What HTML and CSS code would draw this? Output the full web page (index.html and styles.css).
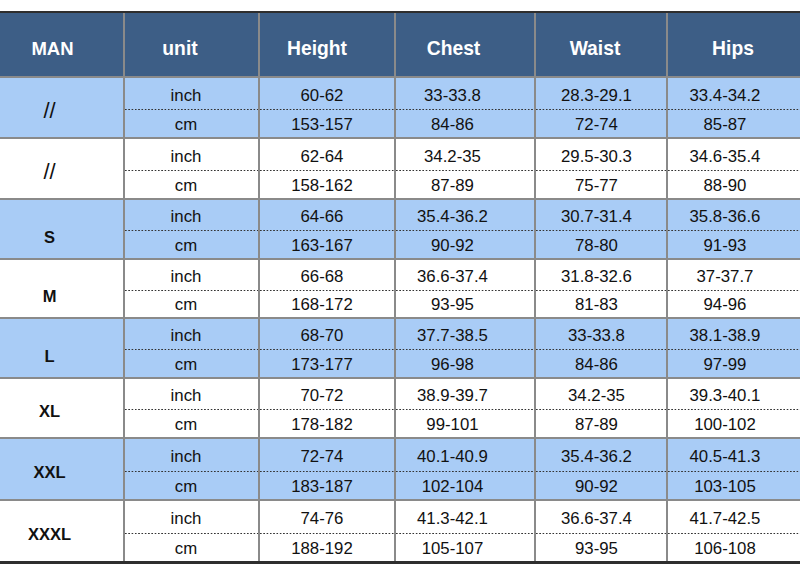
FILE: index.html
```html
<!DOCTYPE html>
<html>
<head>
<meta charset="utf-8">
<link rel="stylesheet" href="styles.css">
</head>
<body>
<div class="chart">
  <div class="hd man">MAN</div>
  <div class="hd">unit</div>
  <div class="hd">Height</div>
  <div class="hd">Chest</div>
  <div class="hd">Waist</div>
  <div class="hd">Hips</div>

  <div class="size blue slash">//</div>
  <div class="cell blue"><span class="t">inch</span><span class="b">cm</span></div>
  <div class="cell blue"><span class="t">60-62</span><span class="b">153-157</span></div>
  <div class="cell blue"><span class="t">33-33.8</span><span class="b">84-86</span></div>
  <div class="cell blue"><span class="t">28.3-29.1</span><span class="b">72-74</span></div>
  <div class="cell blue"><span class="t">33.4-34.2</span><span class="b">85-87</span></div>

  <div class="size slash">//</div>
  <div class="cell"><span class="t">inch</span><span class="b">cm</span></div>
  <div class="cell"><span class="t">62-64</span><span class="b">158-162</span></div>
  <div class="cell"><span class="t">34.2-35</span><span class="b">87-89</span></div>
  <div class="cell"><span class="t">29.5-30.3</span><span class="b">75-77</span></div>
  <div class="cell"><span class="t">34.6-35.4</span><span class="b">88-90</span></div>

  <div class="size blue low">S</div>
  <div class="cell blue"><span class="t">inch</span><span class="b">cm</span></div>
  <div class="cell blue"><span class="t">64-66</span><span class="b">163-167</span></div>
  <div class="cell blue"><span class="t">35.4-36.2</span><span class="b">90-92</span></div>
  <div class="cell blue"><span class="t">30.7-31.4</span><span class="b">78-80</span></div>
  <div class="cell blue"><span class="t">35.8-36.6</span><span class="b">91-93</span></div>

  <div class="size low">M</div>
  <div class="cell"><span class="t">inch</span><span class="b">cm</span></div>
  <div class="cell"><span class="t">66-68</span><span class="b">168-172</span></div>
  <div class="cell"><span class="t">36.6-37.4</span><span class="b">93-95</span></div>
  <div class="cell"><span class="t">31.8-32.6</span><span class="b">81-83</span></div>
  <div class="cell"><span class="t">37-37.7</span><span class="b">94-96</span></div>

  <div class="size blue low">L</div>
  <div class="cell blue"><span class="t">inch</span><span class="b">cm</span></div>
  <div class="cell blue"><span class="t">68-70</span><span class="b">173-177</span></div>
  <div class="cell blue"><span class="t">37.7-38.5</span><span class="b">96-98</span></div>
  <div class="cell blue"><span class="t">33-33.8</span><span class="b">84-86</span></div>
  <div class="cell blue"><span class="t">38.1-38.9</span><span class="b">97-99</span></div>

  <div class="size">XL</div>
  <div class="cell"><span class="t">inch</span><span class="b">cm</span></div>
  <div class="cell"><span class="t">70-72</span><span class="b">178-182</span></div>
  <div class="cell"><span class="t">38.9-39.7</span><span class="b">99-101</span></div>
  <div class="cell"><span class="t">34.2-35</span><span class="b">87-89</span></div>
  <div class="cell"><span class="t">39.3-40.1</span><span class="b">100-102</span></div>

  <div class="size blue">XXL</div>
  <div class="cell blue"><span class="t">inch</span><span class="b">cm</span></div>
  <div class="cell blue"><span class="t">72-74</span><span class="b">183-187</span></div>
  <div class="cell blue"><span class="t">40.1-40.9</span><span class="b">102-104</span></div>
  <div class="cell blue"><span class="t">35.4-36.2</span><span class="b">90-92</span></div>
  <div class="cell blue"><span class="t">40.5-41.3</span><span class="b">103-105</span></div>

  <div class="size">XXXL</div>
  <div class="cell"><span class="t">inch</span><span class="b">cm</span></div>
  <div class="cell"><span class="t">74-76</span><span class="b">188-192</span></div>
  <div class="cell"><span class="t">41.3-42.1</span><span class="b">105-107</span></div>
  <div class="cell"><span class="t">36.6-37.4</span><span class="b">93-95</span></div>
  <div class="cell"><span class="t">41.7-42.5</span><span class="b">106-108</span></div>
</div>
</body>
</html>
```

FILE: styles.css
```css
html, body {
  margin: 0;
  padding: 0;
  background: #ffffff;
}

body {
  font-family: "Liberation Sans", Arial, sans-serif;
}

.chart {
  margin-top: 11px;
  width: 800px;
  border-top: 2px solid #2e2e2e;
  border-bottom: 3px solid #2e2e2e;
  background: #8a8a8a;
  display: grid;
  grid-template-columns: 123px 133px 134px 138px 130px 132px;
  grid-template-rows: 63px 59px 59px 58px 57px 58px 58px 60px 60px;
  gap: 2px;
}

.hd {
  background: #3d5e86;
  color: #ffffff;
  font-weight: bold;
  font-size: 19.3px;
  display: flex;
  align-items: center;
  justify-content: center;
  padding-top: 8px;
}

.hd.man {
  padding-right: 18px;
  font-size: 18.5px;
}

.hd:nth-child(6n+2) { padding-right: 23px; }
.hd:nth-child(6n+3) { padding-right: 20px; }
.hd:nth-child(6n+4) { padding-right: 23px; }
.hd:nth-child(6n+5) { padding-right: 12px; }
.hd:nth-child(6n+6) { padding-right: 2px; }

.size {
  background: #ffffff;
  color: #111111;
  font-weight: bold;
  font-size: 16.5px;
  display: flex;
  align-items: center;
  justify-content: center;
  padding-right: 24px;
  padding-top: 6px;
}

.size.low {
  padding-top: 16px;
}

.size.slash {
  font-weight: normal;
  font-size: 22px;
}

.cell {
  background: #ffffff;
  color: #111111;
  font-size: 16.8px;
  display: grid;
  grid-template-rows: 32fr 27fr;
}

.blue {
  background-color: #a9ccf6;
}

.t, .b {
  display: flex;
  align-items: center;
  justify-content: center;
  padding-top: 3px;
}

.cell:nth-child(6n+2) > span { padding-right: 11px; }
.cell:nth-child(6n+3) > span { padding-right: 10px; }
.cell:nth-child(6n+4) > span { padding-right: 25px; }
.cell:nth-child(6n+5) > span { padding-right: 9px; }
.cell:nth-child(6n+6) > span { padding-right: 18px; }

.t {
  background-image: linear-gradient(to right, #333333 1.4px, transparent 1.4px);
  background-size: 3.3px 1px;
  background-repeat: repeat-x;
  background-position: left bottom;
}
```
